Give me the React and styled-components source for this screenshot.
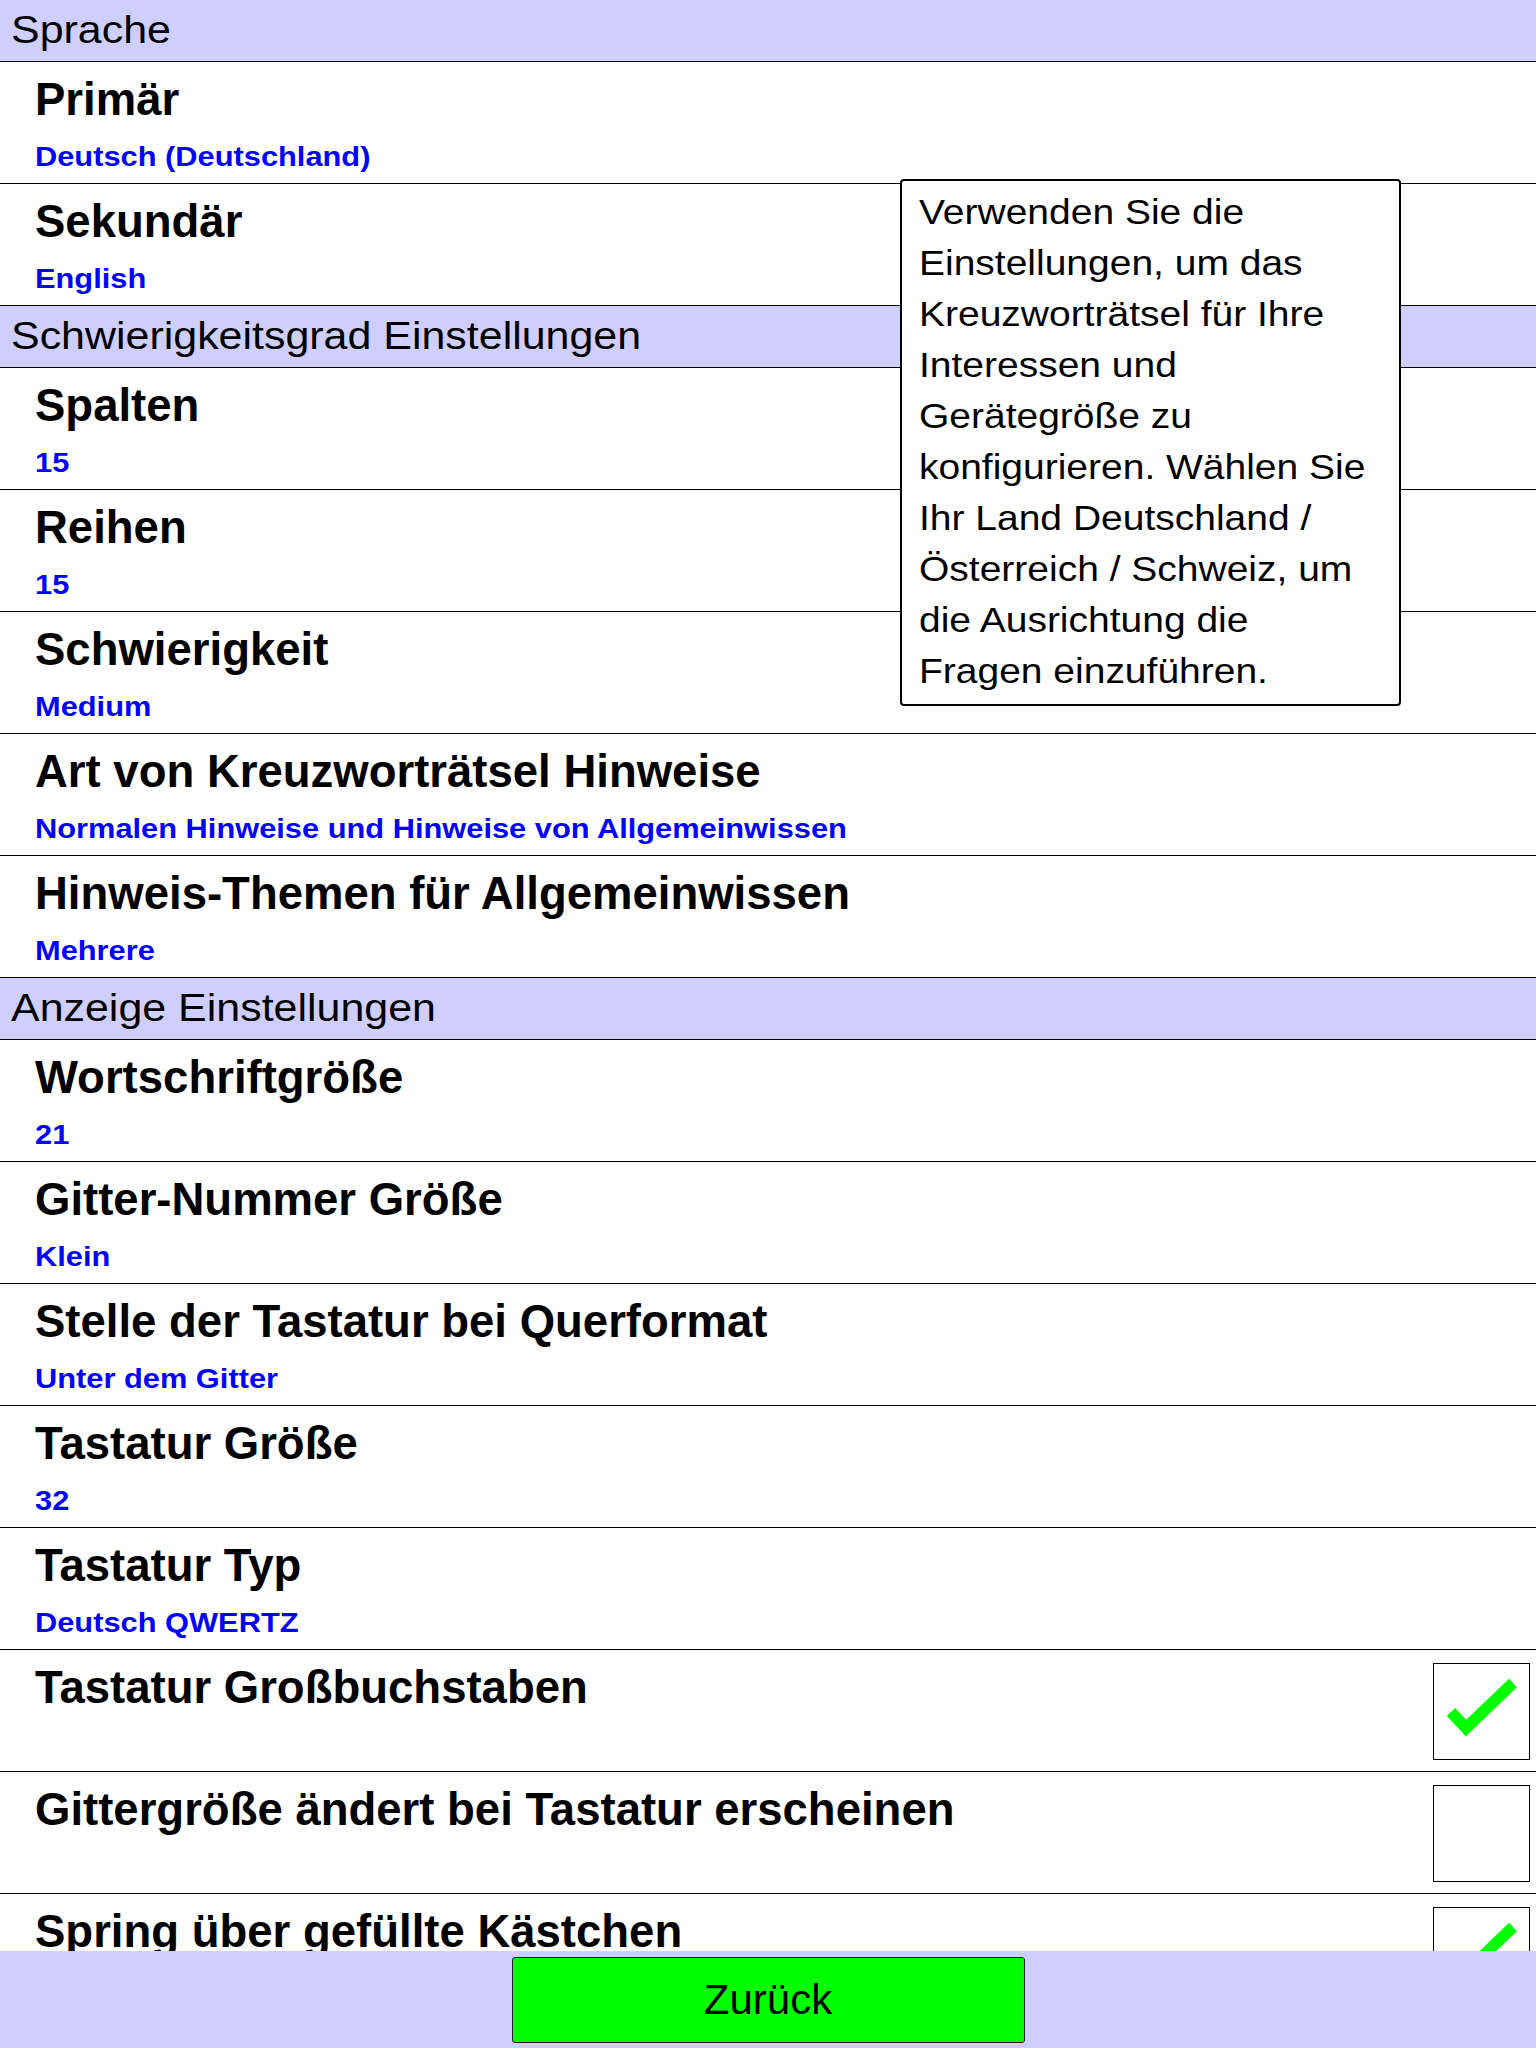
import styled, { createGlobalStyle } from "styled-components"

const GlobalStyle = createGlobalStyle`
  html, body, #root {
    margin: 0;
    height: 100%;
  }
  body {
    font-family: "Liberation Sans", Arial, sans-serif;
    background: #fff;
  }
`

const sections = [
  {
    title: "Sprache",
    items: [
      { label: "Primär", value: "Deutsch (Deutschland)" },
      { label: "Sekundär", value: "English" },
    ],
  },
  {
    title: "Schwierigkeitsgrad Einstellungen",
    items: [
      { label: "Spalten", value: "15" },
      { label: "Reihen", value: "15" },
      { label: "Schwierigkeit", value: "Medium" },
      {
        label: "Art von Kreuzworträtsel Hinweise",
        value: "Normalen Hinweise und Hinweise von Allgemeinwissen",
      },
      { label: "Hinweis-Themen für Allgemeinwissen", value: "Mehrere" },
    ],
  },
  {
    title: "Anzeige Einstellungen",
    items: [
      { label: "Wortschriftgröße", value: "21" },
      { label: "Gitter-Nummer Größe", value: "Klein" },
      { label: "Stelle der Tastatur bei Querformat", value: "Unter dem Gitter" },
      { label: "Tastatur Größe", value: "32" },
      { label: "Tastatur Typ", value: "Deutsch QWERTZ" },
      { label: "Tastatur Großbuchstaben", checked: true },
      { label: "Gittergröße ändert bei Tastatur erscheinen", checked: false },
      { label: "Spring über gefüllte Kästchen", checked: true },
    ],
  },
]

const hintLines = [
  "Verwenden Sie die",
  "Einstellungen, um das",
  "Kreuzworträtsel für Ihre",
  "Interessen und",
  "Gerätegröße zu",
  "konfigurieren. Wählen Sie",
  "Ihr Land Deutschland /",
  "Österreich / Schweiz, um",
  "die Ausrichtung die",
  "Fragen einzuführen.",
]

const Check = ({ checked }) => (
  <CheckBox>
    {checked && (
      <svg width="96" height="96" viewBox="0 0 96 96">
        <polyline
          points="18,49 33,65 80,20"
          fill="none"
          stroke="#00ff00"
          strokeWidth="11.5"
          strokeLinejoin="miter"
        />
      </svg>
    )}
  </CheckBox>
)

export default function App() {
  return (
    <Page>
      <GlobalStyle />
      <List>
        {sections.map((section) => (
          <div key={section.title}>
            <SectionHeader>
              <HeaderText>{section.title}</HeaderText>
            </SectionHeader>
            {section.items.map((item) => (
              <Row key={item.label}>
                <RowText>
                  <Title>{item.label}</Title>
                  {item.value && <Value>{item.value}</Value>}
                </RowText>
                {item.checked !== undefined && <Check checked={item.checked} />}
              </Row>
            ))}
          </div>
        ))}
        <Hint>
          {hintLines.map((line) => (
            <HintLine key={line}>{line}</HintLine>
          ))}
        </Hint>
      </List>
      <Footer>
        <BackButton>Zurück</BackButton>
      </Footer>
    </Page>
  )
}

const Page = styled.div`
  display: flex;
  flex-direction: column;
  height: 100vh;
`

const List = styled.div`
  position: relative;
  flex: 1;
  overflow: hidden;
`

const SectionHeader = styled.div`
  box-sizing: border-box;
  height: 62px;
  padding-left: 11px;
  line-height: 61px;
  background: #cfcffd;
  border-bottom: 1px solid #000;
  white-space: nowrap;
`

const HeaderText = styled.span`
  display: inline-block;
  font-size: 38px;
  color: #000;
  transform: scaleX(1.13);
  transform-origin: left center;
`

const Row = styled.div`
  box-sizing: border-box;
  height: 122px;
  display: flex;
  justify-content: space-between;
  align-items: flex-start;
  padding: 12px 6px 0 35px;
  border-bottom: 1px solid #000;
`

const RowText = styled.div`
  display: flex;
  flex-direction: column;
`

const Title = styled.div`
  font-size: 45.5px;
  font-weight: bold;
  line-height: 52px;
  color: #000;
  white-space: nowrap;
`

const Value = styled.div`
  margin-top: 15px;
  font-size: 28px;
  font-weight: bold;
  line-height: 32px;
  color: #0000ff;
  white-space: nowrap;
  transform: scaleX(1.1);
  transform-origin: left center;
`

const CheckBox = styled.div`
  box-sizing: border-box;
  width: 97px;
  height: 97px;
  margin-top: 1px;
  border: 1px solid #000;
  background: #fff;

  svg {
    display: block;
    margin: -1px;
  }
`

const Hint = styled.div`
  position: absolute;
  top: 179px;
  left: 900px;
  box-sizing: border-box;
  width: 501px;
  height: 527px;
  padding: 6px 0 0 17px;
  background: #fff;
  border: 2px solid #000;
  border-radius: 4px;
  font-size: 34.5px;
  line-height: 51px;
  color: #000;
`

const HintLine = styled.div`
  white-space: nowrap;
  transform: scaleX(1.13);
  transform-origin: left center;
`

const Footer = styled.div`
  flex: 0 0 97px;
  display: flex;
  align-items: center;
  justify-content: center;
  background: #cfcffd;
`

const BackButton = styled.button`
  width: 513px;
  height: 86px;
  padding: 0;
  background: #00ff00;
  border: 1px solid #222;
  border-radius: 3px;
  font-family: "Liberation Sans", Arial, sans-serif;
  font-size: 42px;
  color: #000;
`
